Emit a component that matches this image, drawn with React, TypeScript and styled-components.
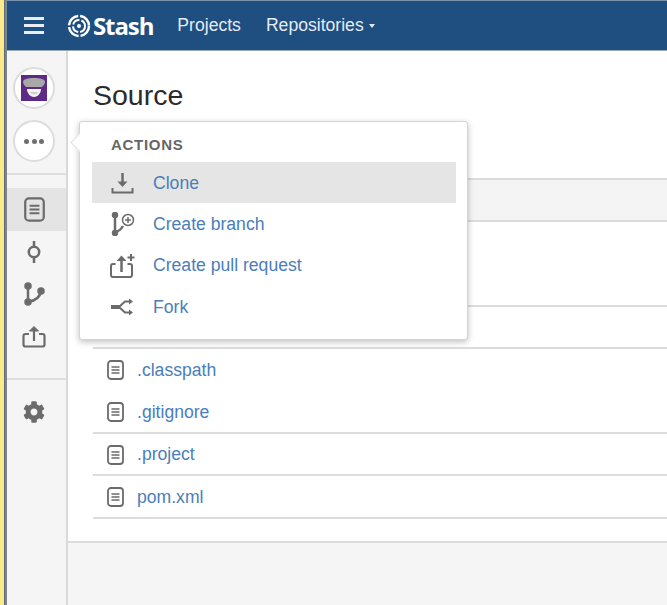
import React from 'react';
import styled, { createGlobalStyle } from 'styled-components';
import { FaCog } from 'react-icons/fa';

const GlobalStyle = createGlobalStyle`
	html, body {
		margin: 0;
		padding: 0;
		background: #fff;
		overflow: hidden;
	}
	* {
		box-sizing: border-box;
	}
`;

const Page = styled.div`
	width: 667px;
	height: 605px;
	display: flex;
	background: #fff;
	font-family: 'Liberation Sans', Arial, sans-serif;
	overflow: hidden;
`;

const Stripe = styled.div`
	flex: 0 0 7px;
	background: #fbe98a;
	border-right: 2px solid #7a8590;
	box-shadow: inset -1px 0 0 #5f6b78;
`;

const Window = styled.div`
	flex: 1;
	display: flex;
	flex-direction: column;
	min-width: 0;
`;

const TopBar = styled.header`
	flex: 0 0 51px;
	display: flex;
	align-items: center;
	background: #1f4e80;
	border-top: 1px solid #7d93ab;
	border-bottom: 1px solid #9aa7b5;
	padding-left: 17px;
	color: #fff;
`;

const Burger = styled.div`
	width: 20px;
	display: flex;
	flex-direction: column;
	gap: 4.5px;
	margin-right: 23px;
	span {
		height: 2.5px;
		background: #e8eef4;
	}
`;

const LogoWord = styled.span`
	font-family: 'Open Sans', sans-serif;
	font-size: 24px;
	font-weight: 700;
	letter-spacing: -1.1px;
	margin: 0 24px 0 2px;
`;

const NavItem = styled.a`
	font-size: 17.6px;
	color: #e4ebf2;
	margin-right: 25px;
	display: flex;
	align-items: center;
	gap: 5px;
`;

const Caret = styled.i`
	width: 0;
	height: 0;
	border-left: 3.5px solid transparent;
	border-right: 3.5px solid transparent;
	border-top: 4px solid #e4ebf2;
`;

const Body = styled.div`
	flex: 1;
	display: flex;
	position: relative;
	min-height: 0;
`;

const Sidebar = styled.nav`
	flex: 0 0 61px;
	background: #f5f5f5;
	border-right: 2px solid #d9d9d9;
	display: flex;
	flex-direction: column;
`;

const SideTop = styled.div`
	height: 124px;
	padding: 16px 0 0 6px;
	border-bottom: 2px solid #dedede;
	display: flex;
	flex-direction: column;
	gap: 11px;
`;

const Circle = styled.div`
	width: 42px;
	height: 42px;
	border-radius: 50%;
	background: #fff;
	border: 2px solid #dcdcdc;
	display: flex;
	align-items: center;
	justify-content: center;
`;

const Dots = styled.div`
	display: flex;
	gap: 2.5px;
	i {
		width: 5px;
		height: 5px;
		border-radius: 50%;
		background: #6f6f6f;
	}
`;

const SideItem = styled.div<{ $active?: boolean }>`
	height: 42.5px;
	display: flex;
	align-items: center;
	justify-content: center;
	padding-right: 5px;
	color: #6b6b6b;
	background: ${(p) => (p.$active ? '#e4e4e4' : 'transparent')};
`;

const SideGroup = styled.div`
	padding-top: 13px;
	height: 205px;
	border-bottom: 2px solid #dedede;
`;

const SideBottom = styled.div`
	padding-top: 11px;
`;

const Main = styled.main`
	flex: 1;
	display: flex;
	flex-direction: column;
	min-width: 0;
`;

const Content = styled.div`
	height: 492px;
	padding: 26px 0 0 25px;
	border-bottom: 2px solid #dcdcdc;
`;

const Heading = styled.h1`
	margin: 0 0 65px;
	font-size: 28.5px;
	line-height: 36px;
	font-weight: 400;
	color: #2b2b2b;
`;

const TableHead = styled.div`
	height: 44px;
	background: #f4f4f4;
	border-top: 2px solid #dcdcdc;
	border-bottom: 2px solid #dcdcdc;
`;

const Spacer = styled.div<{ $h: number }>`
	height: ${(p) => p.$h}px;
	border-bottom: 2px solid #dcdcdc;
`;

const Row = styled.div<{ $plain?: boolean }>`
	height: ${(p) => (p.$plain ? '42px' : '42.5px')};
	display: flex;
	align-items: center;
	padding: ${(p) => (p.$plain ? '0' : '2px')} 0 0 14px;
	gap: 13px;
	border-bottom: ${(p) => (p.$plain ? '0' : '2px solid #dcdcdc')};
	font-size: 17.6px;
	color: #4a7ebb;
`;

const Footer = styled.div`
	flex: 1;
	background: #f5f5f5;
`;

const Popup = styled.div`
	position: absolute;
	left: 72px;
	top: 70px;
	width: 389px;
	height: 219px;
	background: #fff;
	border: 1px solid #d4d4d4;
	border-radius: 3px;
	box-shadow: 0 2px 6px rgba(0, 0, 0, 0.25);
	padding: 14px 11px 0 12px;
	&::before {
		content: '';
		position: absolute;
		left: -7px;
		top: 14px;
		width: 12px;
		height: 12px;
		background: #fff;
		border-left: 1px solid #e2e2e2;
		border-bottom: 1px solid #e2e2e2;
		transform: rotate(45deg);
	}
`;

const PopupTitle = styled.div`
	font-size: 15px;
	font-weight: 700;
	letter-spacing: 0.7px;
	color: #666;
	padding-left: 19px;
	height: 26px;
	line-height: 17px;
`;

const MenuItem = styled.div<{ $active?: boolean }>`
	height: 41.3px;
	display: flex;
	align-items: center;
	padding: 1px 0 0 18px;
	gap: 18px;
	font-size: 17.6px;
	color: #4a7ebb;
	background: ${(p) => (p.$active ? '#e5e5e5' : 'transparent')};
`;

const IconBox = styled.span`
	width: 25px;
	height: 26px;
	display: flex;
	align-items: center;
	justify-content: center;
	flex: 0 0 25px;
`;

const FileSvg = ({ large }: { large?: boolean }) => (
	<svg width={large ? 21 : 17} height={large ? 25 : 20} viewBox='0 0 17 20' fill='none' stroke='#6b6b6b' strokeWidth='1.8'>
		<rect x='1' y='1' width='15' height='18' rx='3' />
		<path d='M4.500 7h8M4.500 10h8M4.500 13h8' strokeWidth='1.500' />
	</svg>
);

const CommitSvg = () => (
	<svg width='16' height='24' viewBox='0 0 16 24' fill='none' stroke='#6b6b6b' strokeWidth='2.500'>
		<circle cx='8' cy='12' r='5.200' />
		<path d='M8 1v5.500M8 17.500V23' />
	</svg>
);

const BranchSvg = () => (
	<svg width='22' height='24' viewBox='0 0 22 24' fill='#6b6b6b' stroke='#6b6b6b' strokeWidth='2.500'>
		<circle cx='5' cy='4' r='2.500' />
		<circle cx='5' cy='20' r='2.500' />
		<circle cx='18' cy='9' r='2.500' />
		<path d='M5 4v16M5 20c6-1 12-4 13-11' fill='none' />
	</svg>
);

const ShareSvg = () => (
	<svg width='24' height='23' viewBox='0 0 24 23' fill='none' stroke='#6b6b6b' strokeWidth='2.200'>
		<path d='M7 9H3.500a2 2 0 00-2 2v8.500a2 2 0 002 2h17a2 2 0 002-2V11a2 2 0 00-2-2H17' />
		<path d='M12 16V4' />
		<path d='M7.500 6L12 1.500 16.500 6z' fill='#6b6b6b' strokeWidth='1' />
	</svg>
);

const CloneSvg = () => (
	<svg width='23' height='21' viewBox='0 0 23 21' fill='none' stroke='#6b6b6b' strokeWidth='2'>
		<path d='M1.500 15v4.500h20V15' />
		<path d='M11.500 0v9' strokeWidth='2.500' />
		<path d='M6.500 8.500h10l-5 5.500z' fill='#6b6b6b' stroke='none' />
	</svg>
);

const NewBranchSvg = () => (
	<svg width='24' height='24' viewBox='0 0 24 24' fill='none' stroke='#6b6b6b' strokeWidth='2.500'>
		<circle cx='4' cy='3' r='2' fill='#6b6b6b' />
		<circle cx='4' cy='21' r='2' fill='#6b6b6b' />
		<path d='M4 4v16c3-.5 6-2.500 8-6' />
		<circle cx='17' cy='8' r='5.500' strokeWidth='1.500' />
		<path d='M14 8h6M17 5v6' strokeWidth='1.500' />
	</svg>
);

const NewPullSvg = () => (
	<svg width='25' height='25' viewBox='0 0 25 25' fill='none' stroke='#6b6b6b' strokeWidth='2'>
		<path d='M5.500 11H3a2 2 0 00-2 2v9a2 2 0 002 2h17a2 2 0 002-2v-9a2 2 0 00-2-2h-2.500' />
		<path d='M11.500 19V6' strokeWidth='2.500' />
		<path d='M6.500 8l5-5.500 5 5.500z' fill='#6b6b6b' stroke='none' />
		<path d='M21 1v7M17.500 4.500h7' />
	</svg>
);

const ForkSvg = () => (
	<svg width='23' height='18' viewBox='0 0 23 18' fill='none' stroke='#6b6b6b' strokeWidth='2'>
		<path d='M0 9h9' strokeWidth='4' />
		<path d='M8 9l6-5.500h5M8 9l6 5.500h5' />
		<path d='M18 0.500v6l4-3zM18 11.500v6l4-3z' fill='#6b6b6b' stroke='none' />
	</svg>
);

const StashLogo = () => (
	<svg width='24' height='24' viewBox='0 0 24 24' fill='none' stroke='#fff'>
		<circle cx='12' cy='12' r='10' strokeWidth='2.500' strokeDasharray='14 2' />
		<circle cx='12' cy='12' r='6' strokeWidth='2' strokeDasharray='8 2' />
		<circle cx='12' cy='12' r='2' fill='#fff' stroke='none' />
	</svg>
);

const Avatar = () => (
	<svg width='26' height='26' viewBox='0 0 26 26'>
		<rect width='26' height='26' fill='#5f2a86' />
		<path d='M2 7c0-3 5-4 11-4s11 1 11 4c0 2-2 4-3 5H5C4 11 2 9 2 7z' fill='#a8a8a8' />
		<path d='M6 14h14c0 4-3 8-7 8s-7-4-7-8z' fill='#f4f4f4' />
		<path d='M9 17h8c-.5 1.500-2 2.500-4 2.500S9.500 18.500 9 17z' fill='#cfcfcf' />
	</svg>
);

const menu = [
	{ label: 'Clone', icon: <CloneSvg />, active: true },
	{ label: 'Create branch', icon: <NewBranchSvg /> },
	{ label: 'Create pull request', icon: <NewPullSvg /> },
	{ label: 'Fork', icon: <ForkSvg /> },
];

const App = () => {
	return (
		<Page>
			<GlobalStyle />
			<Stripe />
			<Window>
				<TopBar>
					<Burger>
						<span />
						<span />
						<span />
					</Burger>
					<StashLogo />
					<LogoWord>Stash</LogoWord>
					<NavItem>Projects</NavItem>
					<NavItem>
						Repositories
						<Caret />
					</NavItem>
				</TopBar>
				<Body>
					<Sidebar>
						<SideTop>
							<Circle>
								<Avatar />
							</Circle>
							<Circle>
								<Dots>
									<i />
									<i />
									<i />
								</Dots>
							</Circle>
						</SideTop>
						<SideGroup>
							<SideItem $active>
								<FileSvg large />
							</SideItem>
							<SideItem>
								<CommitSvg />
							</SideItem>
							<SideItem>
								<BranchSvg />
							</SideItem>
							<SideItem>
								<ShareSvg />
							</SideItem>
						</SideGroup>
						<SideBottom>
							<SideItem>
								<FaCog size={22} />
							</SideItem>
						</SideBottom>
					</Sidebar>
					<Main>
						<Content>
							<Heading>Source</Heading>
							<TableHead />
							<Spacer $h={85} />
							<Spacer $h={42} />
							<Row $plain>
								<FileSvg />
								.classpath
							</Row>
							<Row>
								<FileSvg />
								.gitignore
							</Row>
							<Row>
								<FileSvg />
								.project
							</Row>
							<Row>
								<FileSvg />
								pom.xml
							</Row>
						</Content>
						<Footer />
					</Main>
					<Popup>
						<PopupTitle>ACTIONS</PopupTitle>
						{menu.map((item) => (
							<MenuItem key={item.label} $active={item.active}>
								<IconBox>{item.icon}</IconBox>
								{item.label}
							</MenuItem>
						))}
					</Popup>
				</Body>
			</Window>
		</Page>
	);
};

export default App;
